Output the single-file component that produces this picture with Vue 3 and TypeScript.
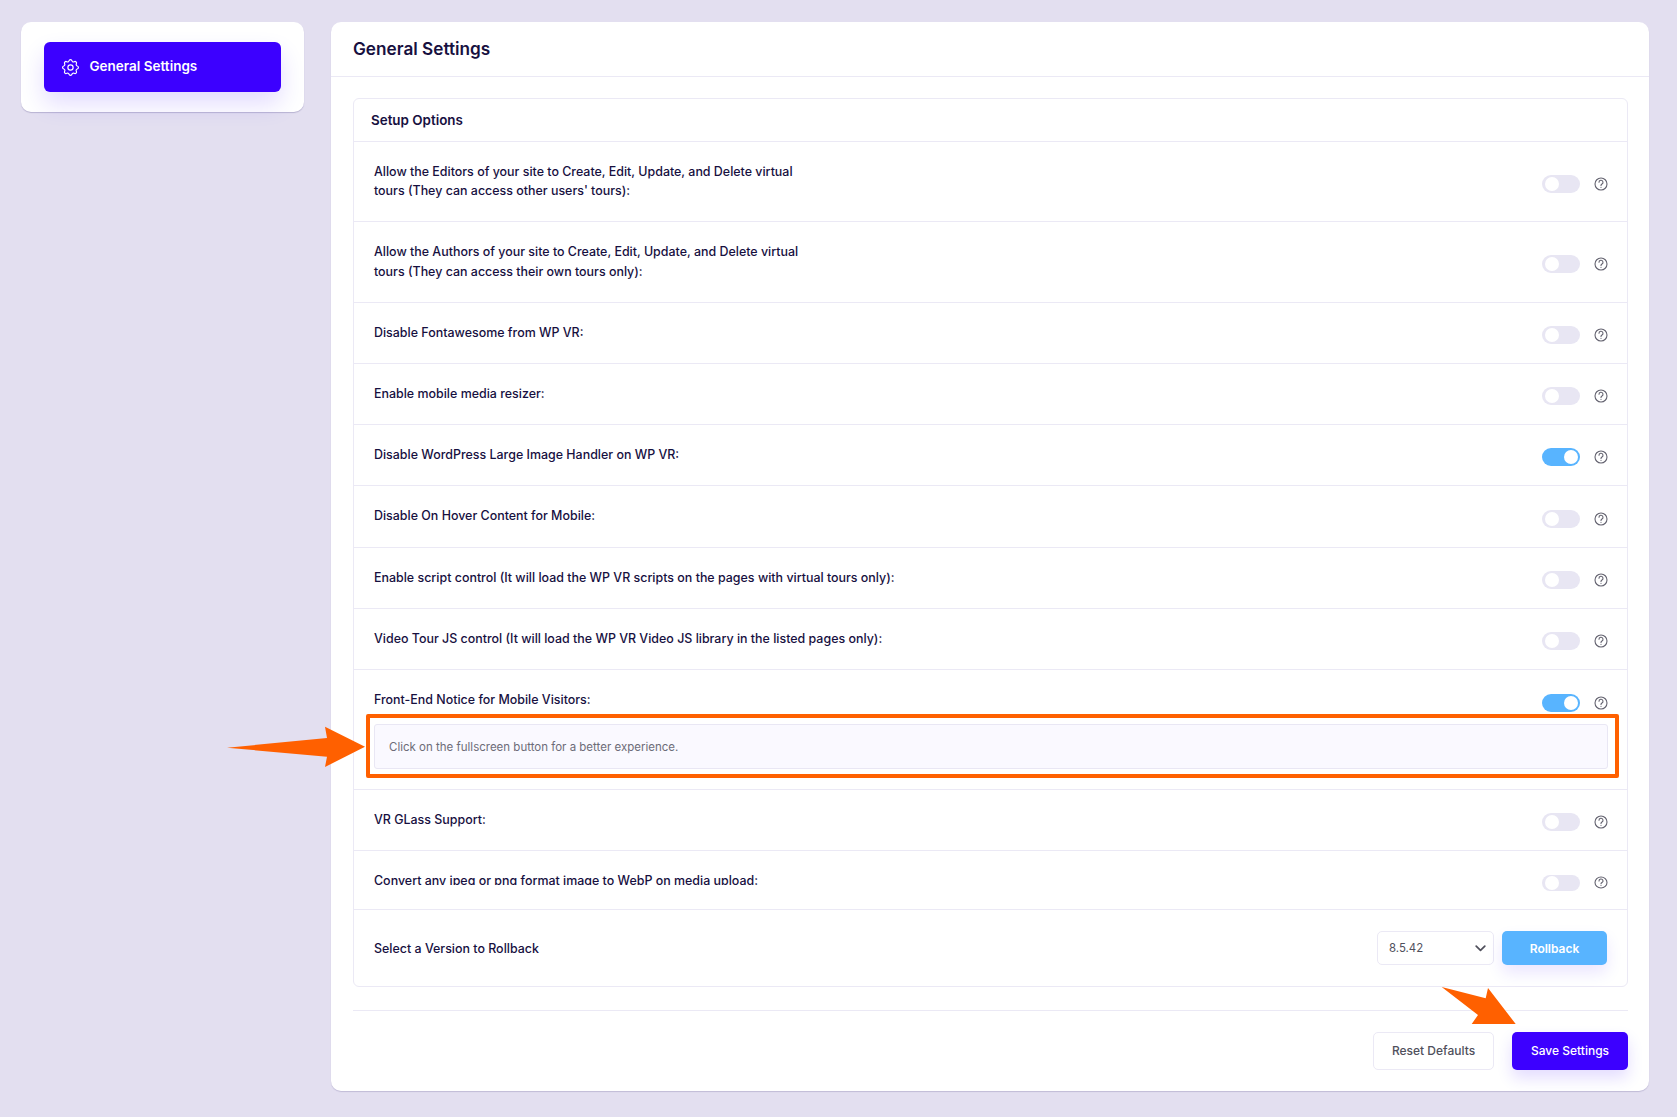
<script setup lang="ts">
interface Opt { label: string[]; on?: boolean }
const rows: Opt[] = [
  { label: ['Allow the Editors of your site to Create, Edit, Update, and Delete virtual', "tours (They can access other users' tours):"] },
  { label: ['Allow the Authors of your site to Create, Edit, Update, and Delete virtual', 'tours (They can access their own tours only):'] },
  { label: ['Disable Fontawesome from WP VR:'] },
  { label: ['Enable mobile media resizer:'] },
  { label: ['Disable WordPress Large Image Handler on WP VR:'], on: true },
  { label: ['Disable On Hover Content for Mobile:'] },
  { label: ['Enable script control (It will load the WP VR scripts on the pages with virtual tours only):'] },
  { label: ['Video Tour JS control (It will load the WP VR Video JS library in the listed pages only):'] },
]
</script>

<template>
  <div class="page">
    <aside class="side">
      <a class="nav">
        <svg class="gear" viewBox="0 0 24 24" fill="none" stroke="currentColor" stroke-width="1.35" stroke-linecap="round" stroke-linejoin="round">
          <circle cx="12" cy="12" r="3" />
          <path d="M10.3 4.3c.4-1.8 3-1.8 3.4 0a1.7 1.7 0 0 0 2.6 1.1c1.5-.9 3.3.8 2.4 2.4a1.7 1.7 0 0 0 1 2.5c1.8.4 1.8 3 0 3.4a1.7 1.7 0 0 0-1 2.6c.9 1.5-.9 3.3-2.4 2.4a1.7 1.7 0 0 0-2.6 1c-.4 1.8-3 1.8-3.4 0a1.7 1.7 0 0 0-2.6-1c-1.5.9-3.3-.9-2.4-2.4a1.7 1.7 0 0 0-1-2.6c-1.8-.4-1.8-3 0-3.4a1.7 1.7 0 0 0 1-2.5c-.9-1.6.9-3.3 2.4-2.4a1.7 1.7 0 0 0 2.6-1.1z" />
        </svg>
        <span>General Settings</span>
      </a>
    </aside>

    <main class="panel">
      <h1 class="title">General Settings</h1>
      <div class="body">
        <section class="card">
          <h2 class="card-title">Setup Options</h2>

          <div v-for="(r, i) in rows" :key="i" class="row">
            <div class="label"><div v-for="l in r.label" :key="l">{{ l }}</div></div>
            <div class="ctl">
              <span class="toggle" :class="{ on: r.on }"><i /></span>
              <svg class="help" viewBox="0 0 14 14" fill="none" stroke="#63626f" stroke-width="1.1" stroke-linecap="round"><circle cx="7" cy="7" r="6" /><path d="M5 5.3a2 2 0 1 1 3 1.7c-.7.4-1 .7-1 1.4" /><path d="M7 10.3v.05" /></svg>
            </div>
          </div>

          <div class="row wrap">
            <div class="head">
              <div class="label">Front-End Notice for Mobile Visitors:</div>
              <div class="ctl top">
                <span class="toggle on"><i /></span>
                <svg class="help" viewBox="0 0 14 14" fill="none" stroke="#63626f" stroke-width="1.1" stroke-linecap="round"><circle cx="7" cy="7" r="6" /><path d="M5 5.3a2 2 0 1 1 3 1.7c-.7.4-1 .7-1 1.4" /><path d="M7 10.3v.05" /></svg>
              </div>
            </div>
            <input class="notice" value="Click on the fullscreen button for a better experience." />
          </div>

          <div class="row">
            <div class="label">VR GLass Support:</div>
            <div class="ctl">
              <span class="toggle"><i /></span>
              <svg class="help" viewBox="0 0 14 14" fill="none" stroke="#63626f" stroke-width="1.1" stroke-linecap="round"><circle cx="7" cy="7" r="6" /><path d="M5 5.3a2 2 0 1 1 3 1.7c-.7.4-1 .7-1 1.4" /><path d="M7 10.3v.05" /></svg>
            </div>
          </div>

          <div class="row clipped">
            <div class="label">Convert any jpeg or png format image to WebP on media upload:</div>
            <div class="ctl">
              <span class="toggle flat"><i /></span>
              <svg class="help flat-help" viewBox="0 0 14 14" preserveAspectRatio="none" fill="none" stroke="#63626f" stroke-width="1.1" stroke-linecap="round"><circle cx="7" cy="7" r="6" /><path d="M5 5.3a2 2 0 1 1 3 1.7c-.7.4-1 .7-1 1.4" /><path d="M7 10.3v.05" /></svg>
            </div>
          </div>

          <div class="row version">
            <div class="label">Select a Version to Rollback</div>
            <div class="ctl">
              <div class="select">
                <span>8.5.42</span>
                <svg width="11" height="7" viewBox="0 0 11 7" fill="none" stroke="#50505c" stroke-width="1.7" stroke-linecap="round" stroke-linejoin="round"><path d="M1.2 1.2 5.5 5.4l4.3-4.2" /></svg>
              </div>
              <button class="btn rollback">Rollback</button>
            </div>
          </div>
        </section>

        <footer class="foot">
          <button class="btn reset">Reset Defaults</button>
          <button class="btn save">Save Settings</button>
        </footer>
      </div>
    </main>

    <div class="mark" />
    <svg class="arrows" width="1677" height="1117" viewBox="0 0 1677 1117">
      <polygon fill="#ff6000" points="227,747.7 327,738 325,726.7 365,746.7 325,767 327,756.7" />
      <polygon fill="#ff6000" points="1441.7,987 1485.7,998.3 1488,988 1515.7,1024 1471.7,1024 1478,1015" />
    </svg>
  </div>
</template>

<style>
html, body { margin: 0; background: #e3dff0; }
</style>

<style scoped>
.page {
  position: relative;
  box-sizing: border-box;
  width: 1677px;
  height: 1117px;
  padding: 22px 28px 26px 21px;
  display: flex;
  align-items: flex-start;
  gap: 27px;
  overflow: hidden;
  background: #e3dff0;
  font-family: Inter, "Liberation Sans", sans-serif;
  color: #17103f;
}
.side {
  flex: 0 0 283px;
  box-sizing: border-box;
  height: 90px;
  padding: 20px 23px;
  background: #fff;
  border-radius: 10px;
  box-shadow: 0 1px 1px rgba(60, 50, 120, 0.25);
}
.nav {
  box-sizing: border-box;
  height: 50px;
  display: flex;
  align-items: center;
  gap: 8.5px;
  padding: 0 0 2px 16px;
  border-radius: 6px;
  background: #3c00ff;
  color: #fff;
  font-size: 13.5px;
  font-weight: 600;
  box-shadow: 0 12px 24px rgba(60, 0, 255, 0.14);
}
.gear { width: 21px; height: 21px; flex: none; margin-top: 2px; }
.panel {
  flex: 1;
  height: 1069px;
  background: #fff;
  border-radius: 10px;
  box-shadow: 0 1px 1px rgba(60, 50, 120, 0.2);
}
.title {
  margin: 0;
  height: 55px;
  box-sizing: border-box;
  padding: 15px 22px 0;
  font-size: 17.2px;
  line-height: 24px;
  font-weight: 600;
  border-bottom: 1px solid #ebe9f5;
}
.body { padding: 21px 21px 0 22px; }
.card {
  border: 1px solid #ebe9f5;
  border-radius: 6px;
}
.card-title {
  margin: 0;
  height: 43px;
  box-sizing: border-box;
  padding: 12px 17px 0;
  font-size: 13.4px;
  line-height: 19px;
  font-weight: 600;
  border-bottom: 1px solid #ebe9f5;
}
.row {
  display: flex;
  justify-content: space-between;
  padding: 20px 19px 21px 20px;
  border-bottom: 1px solid #ebe9f5;
}
.label {
  font-size: 12.45px;
  line-height: 19.2px;
  font-weight: 500;
}
.ctl {
  align-self: center;
  box-sizing: border-box;
  height: 19px;
  padding-top: 5px;
  display: flex;
  align-items: center;
  gap: 14px;
}
.toggle {
  position: relative;
  display: block;
  flex: none;
  width: 38px;
  height: 18px;
  border-radius: 9px;
  background: #e8e6f3;
}
.toggle i {
  position: absolute;
  left: 3px;
  top: 2px;
  width: 14px;
  height: 14px;
  border-radius: 50%;
  background: #fff;
}
.toggle.on { background: #58b4ff; }
.toggle.on i { left: auto; right: 2px; }
.toggle.flat { height: 16px; }
.toggle.flat i { top: 1px; }
.help { width: 14px; height: 14px; flex: none; }
.help.flat-help { height: 13px; }
.wrap {
  display: block;
  padding-bottom: 20px;
}
.head { display: flex; justify-content: space-between; }
.ctl.top { padding-top: 6px; }
.notice {
  display: block;
  width: 100%;
  box-sizing: border-box;
  height: 45px;
  margin-top: 15px;
  padding: 0 14px;
  border: 1px solid #e9e7f4;
  border-radius: 3px;
  background: #faf9ff;
  font-family: inherit;
  font-size: 11.5px;
  color: #6d6c78;
  outline: none;
}
.clipped {
  height: 59px;
  box-sizing: border-box;
  padding: 0 19px 0 20px;
  align-items: flex-start;
}
.clipped .label {
  margin-top: 20px;
  height: 14px;
  overflow: hidden;
}
.clipped .ctl { align-self: flex-start; margin-top: 27px; height: 9px; padding-top: 0; }
.version {
  padding: 21px 20px;
  border-bottom: 0;
  align-items: center;
}
.version .ctl { height: auto; padding: 0; gap: 8px; }
.select {
  box-sizing: border-box;
  width: 117px;
  height: 34px;
  padding: 0 7px 0 11px;
  display: flex;
  align-items: center;
  justify-content: space-between;
  border: 1px solid #ebe9f5;
  border-radius: 5px;
  font-size: 11.4px;
  color: #50505c;
}
.btn {
  box-sizing: border-box;
  font-family: inherit;
  font-size: 12px;
  font-weight: 500;
  border: 0;
  border-radius: 5px;
  padding: 0;
}
.rollback {
  width: 105px;
  height: 34px;
  background: #58b4ff;
  color: #fff;
  font-weight: 600;
  box-shadow: 0 8px 16px rgba(60, 0, 255, 0.1);
}
.foot {
  display: flex;
  justify-content: flex-end;
  gap: 18px;
  margin-top: 23px;
  padding-top: 21px;
  border-top: 1px solid #ebe9f5;
}
.reset {
  width: 121px;
  height: 38px;
  background: #fff;
  border: 1px solid #ebe9f5;
  color: #50505c;
  padding-bottom: 1px;
}
.save {
  width: 116px;
  height: 38px;
  background: #3c00ff;
  color: #fff;
  padding-bottom: 1px;
  box-shadow: 0 8px 16px rgba(60, 0, 255, 0.14);
}
.mark {
  position: absolute;
  left: 366px;
  top: 714px;
  width: 1253px;
  height: 64px;
  box-sizing: border-box;
  border: 4px solid #ff6000;
  border-radius: 2px;
}
.arrows { position: absolute; left: 0; top: 0; pointer-events: none; }
</style>
